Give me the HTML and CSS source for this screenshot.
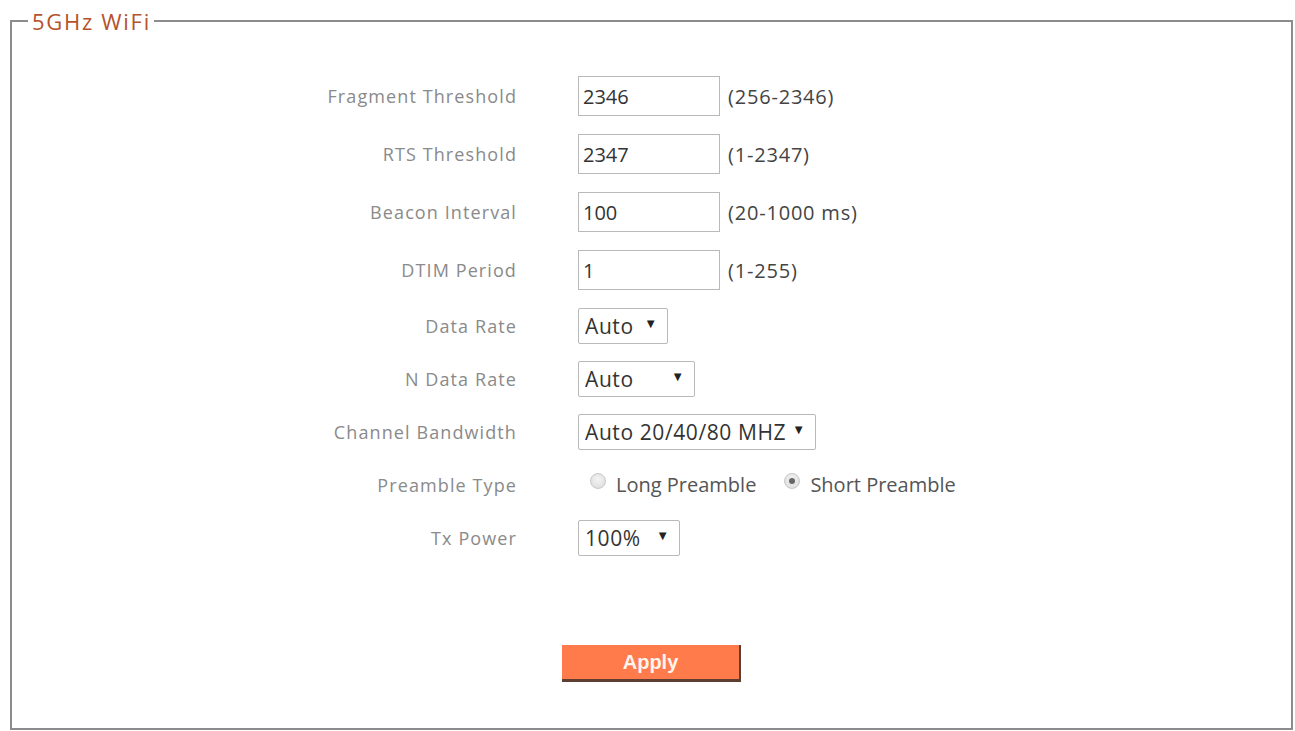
FILE: index.html
```html
<!DOCTYPE html>
<html lang="en">
<head>
    <meta charset="UTF-8">
    <title>5GHz WiFi</title>
    <link rel="stylesheet" href="styles.css">
</head>
<body>
    <fieldset class="panel">
        <legend>5GHz WiFi</legend>
        <form class="settings">
            <div class="row row-text">
                <label for="frag">Fragment Threshold</label>
                <div class="field">
                    <input id="frag" class="text-input" type="text" value="2346">
                    <span class="hint">(256-2346)</span>
                </div>
            </div>
            <div class="row row-text">
                <label for="rts">RTS Threshold</label>
                <div class="field">
                    <input id="rts" class="text-input" type="text" value="2347">
                    <span class="hint">(1-2347)</span>
                </div>
            </div>
            <div class="row row-text">
                <label for="beacon">Beacon Interval</label>
                <div class="field">
                    <input id="beacon" class="text-input" type="text" value="100">
                    <span class="hint">(20-1000 ms)</span>
                </div>
            </div>
            <div class="row row-text">
                <label for="dtim">DTIM Period</label>
                <div class="field">
                    <input id="dtim" class="text-input" type="text" value="1">
                    <span class="hint">(1-255)</span>
                </div>
            </div>
            <div class="row">
                <label for="rate">Data Rate</label>
                <div class="field">
                    <span class="select-wrap w-rate">
                        <select id="rate"><option>Auto</option></select>
                    </span>
                </div>
            </div>
            <div class="row">
                <label for="nrate">N Data Rate</label>
                <div class="field">
                    <span class="select-wrap w-nrate">
                        <select id="nrate"><option>Auto</option></select>
                    </span>
                </div>
            </div>
            <div class="row">
                <label for="bw">Channel Bandwidth</label>
                <div class="field">
                    <span class="select-wrap w-bw">
                        <select id="bw"><option>Auto 20/40/80 MHZ</option></select>
                    </span>
                </div>
            </div>
            <div class="row">
                <label>Preamble Type</label>
                <div class="field radios">
                    <label class="radio"><input type="radio" name="preamble"><span class="dot"></span>Long Preamble</label>
                    <label class="radio"><input type="radio" name="preamble" checked><span class="dot"></span>Short Preamble</label>
                </div>
            </div>
            <div class="row">
                <label for="power">Tx Power</label>
                <div class="field">
                    <span class="select-wrap w-power">
                        <select id="power"><option>100%</option></select>
                    </span>
                </div>
            </div>
            <div class="actions">
                <button type="button" class="apply">Apply</button>
            </div>
        </form>
    </fieldset>
</body>
</html>
```

FILE: styles.css
```css
body {
    margin: 0;
    padding: 9px 2px 2px 10px;
    font-family: "Open Sans", Arial, sans-serif;
    background: #fff;
}

/* Outer frame */
.panel {
    margin: 0;
    padding: 0;
    height: 721px;
    box-sizing: border-box;
    border: 2px solid #8c8c8c;
}

.panel legend {
    margin-left: 16px;
    padding: 0 3px 0 4px;
    font-size: 22px;
    letter-spacing: 1.7px;
    color: #b4532d;
    line-height: 24px;
}

/* Form rows */
.settings {
    padding-top: 34px;
}

.row {
    display: grid;
    grid-template-columns: 505px 1fr;
    column-gap: 61px;
    align-items: center;
    height: 53px;
}

.row-text {
    height: 58px;
}

.row > label {
    text-align: right;
    font-size: 18px;
    letter-spacing: 1.1px;
    color: #8a8a8a;
}

.field {
    display: flex;
    align-items: center;
}

.text-input {
    width: 142px;
    height: 40px;
    box-sizing: border-box;
    border: 1px solid #b9b9b9;
    padding: 0 4px;
    font-family: inherit;
    font-size: 20px;
    color: #333;
    outline: none;
}

.hint {
    margin-left: 8px;
    font-size: 20px;
    letter-spacing: 0.8px;
    color: #444;
}

/* Selects */
.select-wrap {
    position: relative;
    display: inline-block;
    height: 36px;
}

.select-wrap select {
    appearance: none;
    -webkit-appearance: none;
    width: 100%;
    height: 36px;
    box-sizing: border-box;
    border: 1px solid #b9b9b9;
    border-radius: 2px;
    background: #fff;
    padding: 0 0 0 6px;
    font-family: inherit;
    font-size: 21px;
    letter-spacing: 0.6px;
    color: #333;
    outline: none;
}

.select-wrap:after {
    content: '\25BC';
    position: absolute;
    right: 11px;
    top: 6px;
    font-size: 13px;
    color: #222;
    pointer-events: none;
}

.w-rate { width: 90px; }
.w-nrate { width: 117px; }
.w-bw { width: 238px; }
.w-power { width: 102px; }

/* Radios */
.radio {
    display: flex;
    align-items: center;
    font-size: 20px;
    color: #555;
    margin-left: 12px;
    margin-right: 16px;
}

.radio input {
    display: none;
}

.radio .dot {
    width: 16px;
    height: 16px;
    border-radius: 50%;
    box-sizing: border-box;
    border: 1px solid #c8c8c8;
    background: radial-gradient(circle at 50% 40%, #f4f4f4, #d9d9d9);
    margin-right: 10px;
    position: relative;
    top: -4px;
}

.radio input:checked + .dot:after {
    content: '';
    position: absolute;
    left: 4px;
    top: 4px;
    width: 6px;
    height: 6px;
    border-radius: 50%;
    background: #666;
}

/* Apply */
.actions {
    display: flex;
    justify-content: center;
    padding-top: 81px;
}

.apply {
    width: 179px;
    height: 37px;
    border: none;
    border-bottom: 3px solid #5e3e30;
    border-right: 2px solid #5e3e30;
    background-color: #ff7b4b;
    color: #fff4ee;
    font-family: Arial, sans-serif;
    font-weight: bold;
    font-size: 20px;
    cursor: pointer;
}
```
